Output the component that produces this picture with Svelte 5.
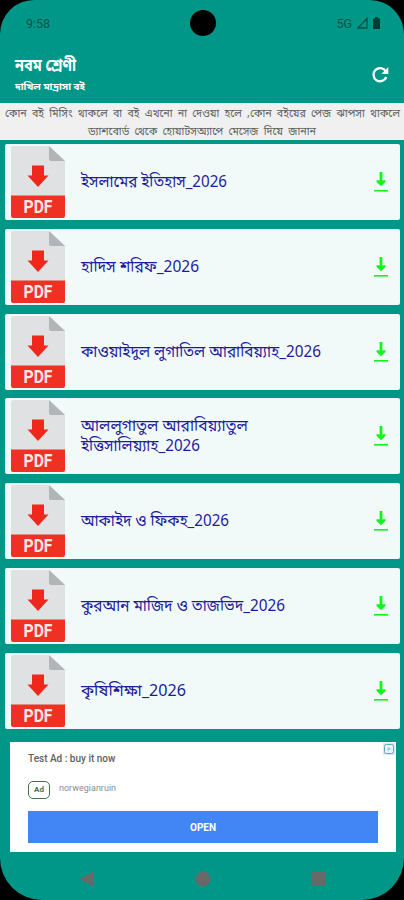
<script>
	// every title is stored line by line with the width of each line
	let books = [
		[{ text: "ইসলামের ইতিহাস_2026", width: 146 }],
		[{ text: "হাদিস শরিফ_2026", width: 118 }],
		[{ text: "কাওয়াইদুল লুগাতিল আরাবিয়্যাহ_2026", width: 240 }],
		[
			{ text: "আললুগাতুল আরাবিয়্যাতুল", width: 167 },
			{ text: "ইত্তিসালিয়্যাহ_2026", width: 119 }
		],
		[{ text: "আকাইদ ও ফিকহ_2026", width: 148 }],
		[{ text: "কুরআন মাজিদ ও তাজভিদ_2026", width: 204 }],
		[{ text: "কৃষিশিক্ষা_2026", width: 105 }]
	];
	let notice = [
		{ text: "কোন বই মিসিং থাকলে বা বই এখনো না দেওয়া হলে ,কোন বইয়ের পেজ ঝাপসা থাকলে", width: 395 },
		{ text: "ড্যাশবোর্ড থেকে হোয়াটসঅ্যাপে মেসেজ দিয়ে জানান", width: 228 }
	];
</script>

{#snippet line(text, width, height, baseline)}
	<svg class="line" {width} {height}>
		<text x="0" y={baseline} textLength={width} lengthAdjust="spacingAndGlyphs">{text}</text>
	</svg>
{/snippet}

<div class="phone">
	<div class="status">
		<span class="time">9:58</span>
		<span class="camera"></span>
		<div class="signals">
			<span>5G</span>
			<svg width="11" height="12" viewBox="0 0 11 12"><path d="M1 11L10 1.500V11z" fill="none" stroke="#075249" stroke-width="1.4" /></svg>
			<svg width="7" height="12" viewBox="0 0 7 12"><path d="M0 1.5h2V0h3v1.5h2V12H0z" fill="#063b35" /></svg>
		</div>
	</div>

	<header>
		<div class="titles">
			<h1>{@render line("নবম শ্রেণী", 61, 24, 17)}</h1>
			<h2>{@render line("দাখিল মাদ্রাসা বই", 70, 17, 12)}</h2>
		</div>
		<svg class="refresh" width="18" height="18" viewBox="0 0 18 18">
			<path d="M14.8 5.3A6.6 6.6 0 1 0 15.3 11" fill="none" stroke="#fff" stroke-width="2.3" />
			<path d="M17.3 1v7h-7z" fill="#fff" />
		</svg>
	</header>

	<div class="notice">
		{#each notice as row}
			{@render line(row.text, row.width, 17.5, 12.5)}
		{/each}
	</div>

	<main>
		{#each books as book}
			<div class="card">
				<svg class="pdf" width="54" height="72" viewBox="0 0 54 72">
					<path d="M2 0h36l16 15v35H0V2q0-2 2-2z" fill="#dfe1e3" />
					<path d="M38 0l16 15H40q-2 0-2-2z" fill="#b1b5b8" />
					<path d="M0 49.500h54V70q0 2-2 2H2q-2 0-2-2z" fill="#ef3124" />
					<path d="M21 19.500h12v10h4.500L27 41 16.500 29.500H21z" fill="#f0281b" />
					<text x="27" y="67" text-anchor="middle" textLength="29" lengthAdjust="spacingAndGlyphs">PDF</text>
				</svg>
				<div class="title">
					{#each book as row}
						{@render line(row.text, row.width, 20, 14.5)}
					{/each}
				</div>
				<svg class="download" width="14" height="20" viewBox="0 0 14 20">
					<path d="M5.600 0h2.800v8.500l3-.5v2L7 14.300 2.600 10V8l3 .5z" fill="#12f51c" />
					<path d="M0 18h14v1.600H0z" fill="#12f51c" />
				</svg>
			</div>
		{/each}
	</main>

	<section class="ad">
		<div class="adTitle">Test Ad : buy it now</div>
		<div class="adRow">
			<span class="badge">Ad</span>
			<span class="advertiser">norwegianruin</span>
		</div>
		<div class="open">OPEN</div>
		<svg class="choices" width="12" height="12" viewBox="0 0 12 12">
			<path d="M0 0h12v12H0z" fill="#d5eaf1" />
			<rect x="1.500" y="1.500" width="9" height="9" rx="2" fill="#e9f5f8" stroke="#58a9bd" />
			<path d="M4.500 4l4 2-4 2z" fill="#9dcbd7" />
		</svg>
	</section>

	<nav>
		<svg width="14" height="16" viewBox="0 0 14 16"><path d="M14 .5v15L.5 8z" fill="#696969" /></svg>
		<svg width="16" height="16" viewBox="0 0 16 16"><circle cx="8" cy="8" r="7.500" fill="#696969" /></svg>
		<svg width="14" height="14" viewBox="0 0 14 14"><rect width="14" height="14" rx="1" fill="#696969" /></svg>
	</nav>
</div>

<style>
	:global(body) {
		background: #000;
	}
	.phone {
		width: 404px;
		height: 900px;
		box-sizing: border-box;
		overflow: hidden;
		background: #009788;
		border-radius: 34px 34px 42px 42px;
		font-family: Roboto, "Noto Sans", "Noto Sans Bengali", sans-serif;
		display: flex;
		flex-direction: column;
	}
	.line {
		display: block;
		overflow: visible;
		fill: currentColor;
		font-family: "Noto Sans", "Noto Sans Bengali", sans-serif;
	}
	.status {
		height: 46px;
		flex: none;
		display: grid;
		grid-template-columns: 1fr 26px 1fr;
		align-items: center;
		padding: 0 24px 0 25px;
		box-sizing: border-box;
		font-size: 12.500px;
		color: #075249;
	}
	.time {
		padding-left: 1px;
	}
	.camera {
		width: 26px;
		height: 26px;
		border-radius: 50%;
		background: #000;
	}
	.signals {
		display: flex;
		justify-content: flex-end;
		align-items: center;
		gap: 5px;
	}
	header {
		height: 57px;
		flex: none;
		display: flex;
		justify-content: space-between;
		align-items: center;
		padding: 0 15px;
		color: #fff;
	}
	h1, h2 {
		margin: 0;
		white-space: nowrap;
	}
	h1 {
		font-size: 17px;
	}
	h2 {
		font-size: 10px;
	}
	.notice {
		height: 37px;
		flex: none;
		box-sizing: border-box;
		padding-top: 1px;
		background: #f0f0f0;
		color: #606060;
		display: flex;
		flex-direction: column;
		align-items: center;
		font-size: 11px;
		word-spacing: 2.500px;
	}
	main {
		display: flex;
		flex-direction: column;
		gap: 8.750px;
		padding: 4px 4px 0 5px;
	}
	.card {
		height: 76px;
		box-sizing: border-box;
		background: #f2faf9;
		border-radius: 2px;
		display: flex;
		align-items: center;
		padding: 0 12px 0 6px;
	}
	.pdf text {
		font: bold 17.500px Roboto, sans-serif;
		fill: #ffe9e6;
	}
	.title {
		margin-left: 16px;
		margin-right: auto;
		font-size: 16px;
		color: #1c1c9c;
	}
	.ad {
		position: relative;
		height: 110px;
		margin: 13.500px 8px 0 10px;
		padding: 10px 18px 0;
		box-sizing: border-box;
		background: #fff;
		flex: none;
	}
	.adTitle {
		font-size: 10px;
		font-weight: 500;
		line-height: 13px;
		color: #606060;
	}
	.adRow {
		display: flex;
		align-items: flex-start;
		gap: 9px;
		margin-top: 15px;
		height: 31px;
	}
	.badge {
		width: 22px;
		height: 18px;
		margin-top: 1px;
		box-sizing: border-box;
		border: 1.500px solid #45704b;
		border-radius: 5px;
		font-size: 8px;
		font-weight: bold;
		line-height: 16px;
		text-align: center;
		color: #45704b;
	}
	.advertiser {
		font-size: 9px;
		line-height: 16px;
		color: #8c8c8c;
	}
	.open {
		height: 32px;
		background: #4285f4;
		color: #fff;
		font-size: 10px;
		font-weight: bold;
		line-height: 33px;
		text-align: center;
	}
	.choices {
		position: absolute;
		top: 1px;
		right: 1px;
	}
	nav {
		height: 48px;
		flex: none;
		padding: 3px 78px 0 79px;
		display: flex;
		justify-content: space-between;
		align-items: center;
	}
</style>
